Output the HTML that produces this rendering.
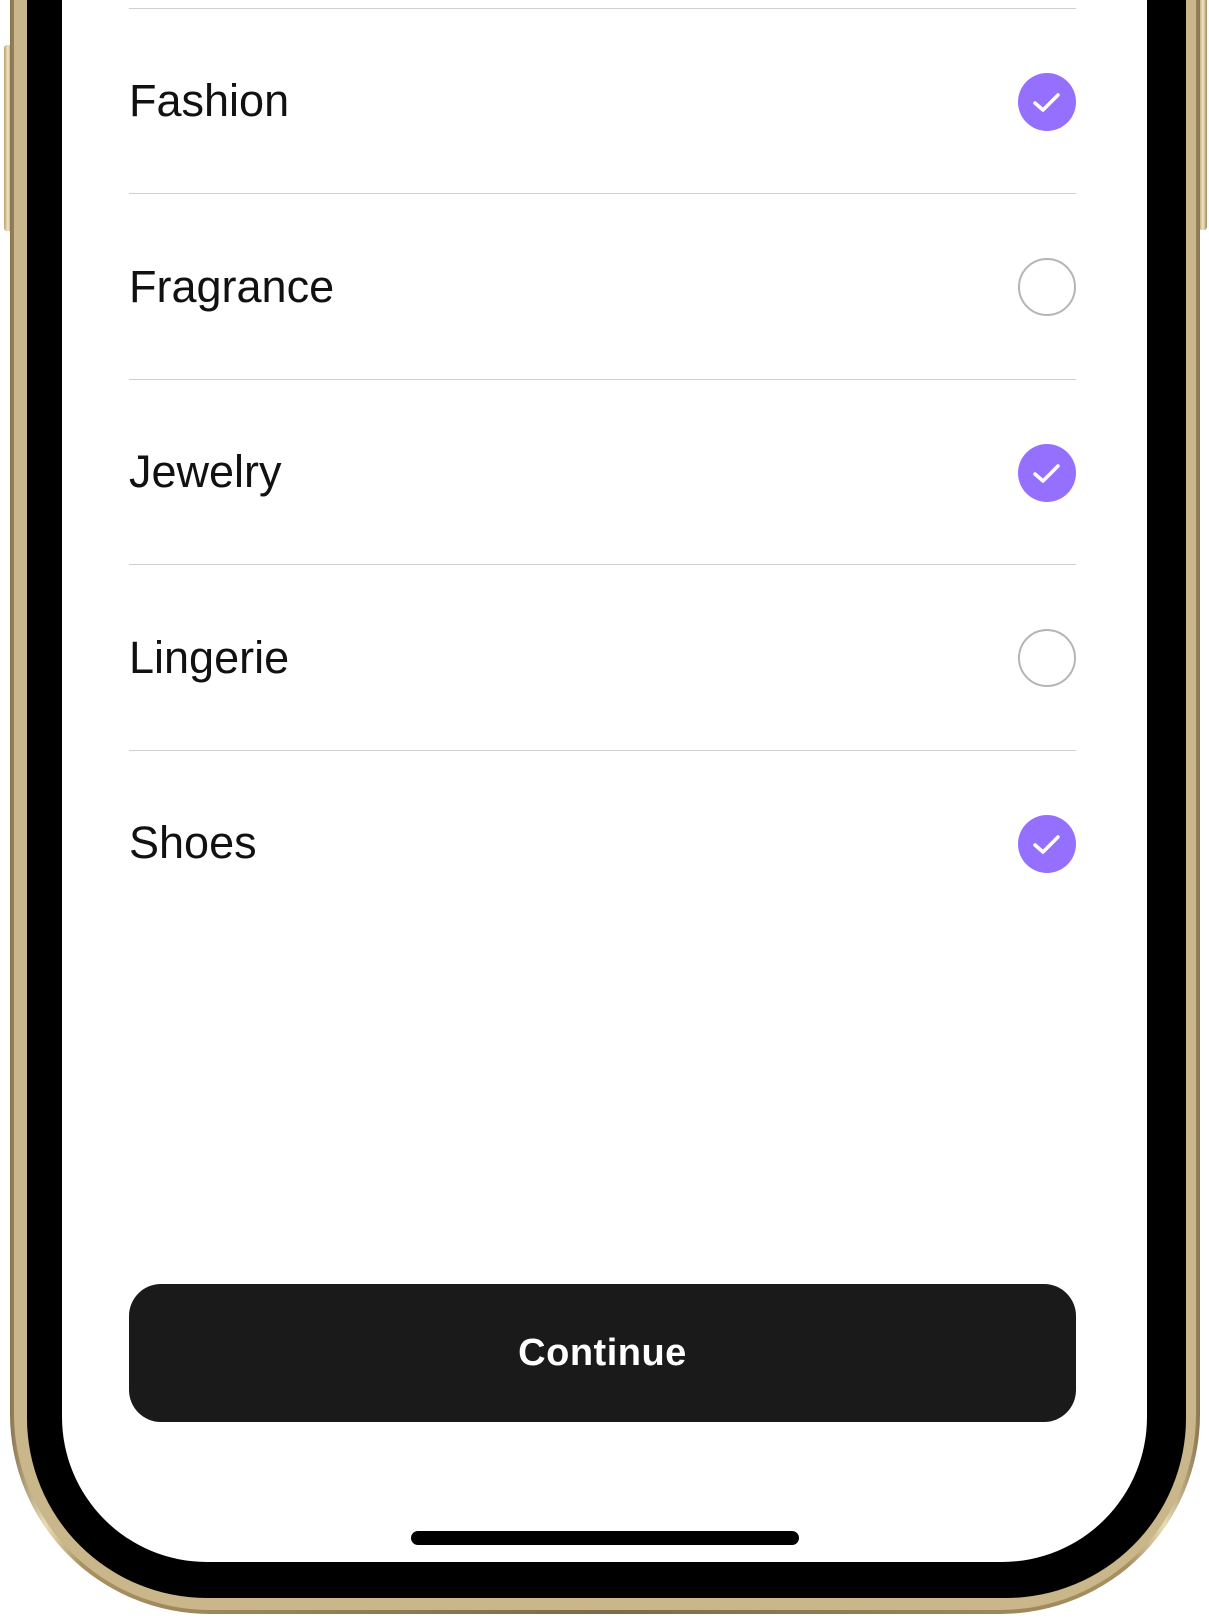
<!DOCTYPE html>
<html><head><meta charset="utf-8"><style>
*{margin:0;padding:0;box-sizing:border-box}
html,body{width:1209px;height:1618px;overflow:hidden;background:#fff;font-family:"Liberation Sans",sans-serif}
.gold{position:absolute;left:10px;right:9px;top:-300px;bottom:4px;border-radius:200px;background:linear-gradient(90deg,#8a7550,#e8dcb5 3%,#a89060 6%,#7d6a48 50%,#a89060 94%,#e8dcb5 97%,#8a7550)}
.gold2{position:absolute;left:14px;right:13px;top:-300px;bottom:8px;border-radius:196px;background:#c9b68a}
.black{position:absolute;left:27px;right:23px;top:-300px;bottom:20px;border-radius:180px;background:#000}
.screen{position:absolute;left:62px;right:62px;top:-300px;bottom:56px;border-radius:145px;background:#fff}
.btnside{position:absolute;left:4px;top:45px;width:8px;height:186px;border-radius:3px;background:linear-gradient(90deg,#b8a270,#f0e6c4,#a08a5a)}
.btnside.r{left:auto;right:2px;top:-20px;height:250px}
.line{position:absolute;left:129px;width:947px;height:1px;background:#cfcfcf}
.lbl{position:absolute;left:129px;font-size:45px;color:#111;line-height:50px}
.c{position:absolute;left:1018px;width:58px;height:58px;border-radius:50%}
.on{background:#9570ff}
.off{border:2px solid #b5b5b5;background:#fff}
.btn{position:absolute;left:129px;top:1284px;width:947px;height:138px;border-radius:32px;background:#1a1a1a;color:#fff;font-weight:bold;font-size:38px;letter-spacing:0.5px;text-align:center;line-height:138px}
.home{position:absolute;left:411px;top:1531px;width:388px;height:14px;border-radius:7px;background:#000}
</style></head><body>
<div class="btnside"></div><div class="btnside r"></div>
<div class="gold"></div><div class="gold2"></div>
<div class="black"></div><div class="screen"></div>
<div class="line" style="top:8px"></div>
<div class="line" style="top:193px"></div>
<div class="line" style="top:379px"></div>
<div class="line" style="top:564px"></div>
<div class="line" style="top:750px"></div>
<div class="lbl" style="top:76px">Fashion</div>
<div class="lbl" style="top:262px">Fragrance</div>
<div class="lbl" style="top:447px">Jewelry</div>
<div class="lbl" style="top:633px">Lingerie</div>
<div class="lbl" style="top:818px">Shoes</div>
<svg class="c on" style="top:73px" viewBox="0 0 58 58"><path d="M17 30l8 7 15-15" fill="none" stroke="#fff" stroke-width="3.5" stroke-linecap="round" stroke-linejoin="round"/></svg>
<div class="c off" style="top:258px"></div>
<svg class="c on" style="top:444px" viewBox="0 0 58 58"><path d="M17 30l8 7 15-15" fill="none" stroke="#fff" stroke-width="3.5" stroke-linecap="round" stroke-linejoin="round"/></svg>
<div class="c off" style="top:629px"></div>
<svg class="c on" style="top:815px" viewBox="0 0 58 58"><path d="M17 30l8 7 15-15" fill="none" stroke="#fff" stroke-width="3.5" stroke-linecap="round" stroke-linejoin="round"/></svg>
<div class="btn">Continue</div>
<div class="home"></div>
</body></html>
